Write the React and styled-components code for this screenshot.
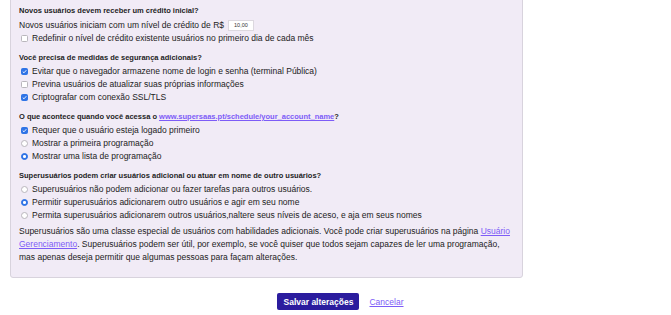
import React from "react"
import styled, { createGlobalStyle } from "styled-components"

const Global = createGlobalStyle`
  html, body {
    margin: 0;
    padding: 0;
    background: #fff;
  }
  body {
    font-family: "Liberation Sans", Arial, sans-serif;
    color: #222;
    font-size: 8.5px;
  }
`

const Page = styled.div`
  padding: 0 0 0 10px;
`

const Panel = styled.div`
  width: 513px;
  box-sizing: border-box;
  margin-top: -2px;
  padding: 5px 8px 13px 8px;
  background: #f1ebf6;
  border: 1px solid #d8d3dd;
  border-radius: 0 0 3px 3px;
  display: flex;
  flex-direction: column;
  gap: 6px;
`

const Section = styled.div`
  display: flex;
  flex-direction: column;
`

const Heading = styled.div`
  font-weight: bold;
  font-size: 7.5px;
  line-height: 13px;
  margin-bottom: 1px;
  color: #1e1e1e;
`

const Line = styled.div`
  display: flex;
  align-items: center;
  height: ${(p) => p.$h || 13}px;
  line-height: 13px;
  white-space: nowrap;
`

const Amount = styled.span`
  display: inline-block;
  width: 26px;
  height: 11px;
  box-sizing: border-box;
  margin-left: 4px;
  background: #fff;
  border: 1px solid #dcd8df;
  font-size: 5.5px;
  line-height: 9px;
  padding-left: 5px;
  color: #333;
`

const Box = styled.span`
  width: 7px;
  height: 7px;
  box-sizing: border-box;
  margin: 0 4px 0 2px;
  border-radius: ${(p) => (p.$round ? "50%" : "1.5px")};
  background: ${(p) => (p.$on ? "#2f74e6" : "#fff")};
  border: 1px solid ${(p) => (p.$on ? "#2f74e6" : "#b9b6bc")};
  display: flex;
  align-items: center;
  justify-content: center;
  flex: none;
`

const Dot = styled.span`
  width: 2.5px;
  height: 2.5px;
  border-radius: 50%;
  background: #fff;
`

const Link = styled.a`
  color: #7d5cf7;
  text-decoration: underline;
`

const Para = styled.p`
  margin: 3px 0 0 0;
  line-height: 13px;
`

const Actions = styled.div`
  display: flex;
  align-items: center;
  justify-content: center;
  gap: 10px;
  margin-top: 15px;
`

const Save = styled.button`
  width: 82px;
  height: 17px;
  border: none;
  border-radius: 2px;
  background: #2b1c9e;
  color: #fff;
  font-family: "Liberation Sans", Arial, sans-serif;
  font-size: 8.5px;
  font-weight: bold;
  padding: 0;
`

const Cancel = styled.a`
  color: #7d5cf7;
  text-decoration: underline;
  font-size: 8.5px;
`

function Check({ on, round, children }) {
  return (
    <Line>
      <Box $on={on} $round={round}>
        {on && round && <Dot />}
        {on && !round && (
          <svg width="5" height="5" viewBox="0 0 10 10">
            <path d="M1.5 5.2 L4 7.6 L8.6 2.4" fill="none" stroke="#fff" strokeWidth="1.8" />
          </svg>
        )}
      </Box>
      {children}
    </Line>
  )
}

export default function App() {
  return (
    <Page>
      <Global />
      <Panel>
        <Section>
          <Heading>Novos usuários devem receber um crédito inicial?</Heading>
          <Line $h={14}>
            Novos usuários iniciam com um nível de crédito de R$
            <Amount>10,00</Amount>
          </Line>
          <Check>Redefinir o nível de crédito existente usuários no primeiro dia de cada mês</Check>
        </Section>

        <Section>
          <Heading>Você precisa de medidas de segurança adicionais?</Heading>
          <Check on>Evitar que o navegador armazene nome de login e senha (terminal Pública)</Check>
          <Check>Previna usuários de atualizar suas próprias informações</Check>
          <Check on>Criptografar com conexão SSL/TLS</Check>
        </Section>

        <Section>
          <Heading>
            O que acontece quando você acessa o{" "}
            <Link href="#">www.supersaas.pt/schedule/your_account_name</Link>?
          </Heading>
          <Check on>Requer que o usuário esteja logado primeiro</Check>
          <Check round>Mostrar a primeira programação</Check>
          <Check round on>Mostrar uma lista de programação</Check>
        </Section>

        <Section>
          <Heading>Superusuários podem criar usuários adicional ou atuar em nome de outro usuários?</Heading>
          <Check round>Superusuários não podem adicionar ou fazer tarefas para outros usuários.</Check>
          <Check round on>Permitir superusuários adicionarem outro usuários e agir em seu nome</Check>
          <Check round>Permita superusuários adicionarem outros usuários,naltere seus níveis de aceso, e aja em seus nomes</Check>
          <Para>
            Superusuários são uma classe especial de usuários com habilidades adicionais. Você pode criar superusuários na página{" "}
            <Link href="#">Usuário Gerenciamento</Link>. Superusuários podem ser útil, por exemplo, se você quiser que todos sejam capazes de ler uma programação, mas apenas deseja permitir que algumas pessoas para façam alterações.
          </Para>
        </Section>
      </Panel>
      <Actions>
        <Save>Salvar alterações</Save>
        <Cancel href="#">Cancelar</Cancel>
      </Actions>
    </Page>
  )
}
